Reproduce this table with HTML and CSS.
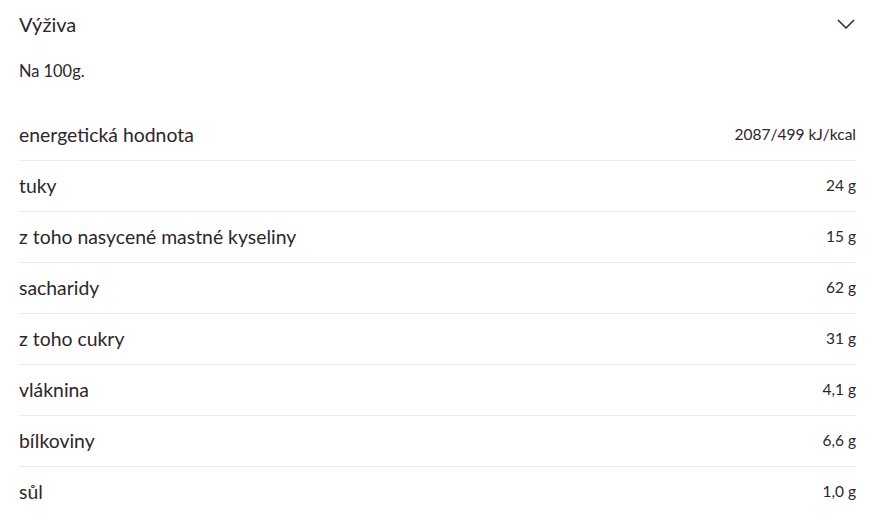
FILE: index.html
```html
<!DOCTYPE html>
<html lang="cs">
<head>
<meta charset="utf-8">
<link rel="stylesheet" href="styles.css">
</head>
<body>
<section class="panel">
  <div class="head">
    <h2 class="title">Výživa</h2>
    <svg class="chev" width="18" height="10" viewBox="0 0 18 10"><path d="M1 1 L9 9 L17 1" fill="none" stroke="#2e2629" stroke-width="1.5"/></svg>
  </div>
  <p class="note">Na 100g.</p>
  <ul class="rows">
    <li class="row"><span class="label">energetická hodnota</span><span class="val">2087/499 kJ/kcal</span></li>
    <li class="row"><span class="label">tuky</span><span class="val">24 g</span></li>
    <li class="row"><span class="label">z toho nasycené mastné kyseliny</span><span class="val">15 g</span></li>
    <li class="row"><span class="label">sacharidy</span><span class="val">62 g</span></li>
    <li class="row"><span class="label">z toho cukry</span><span class="val">31 g</span></li>
    <li class="row"><span class="label">vláknina</span><span class="val">4,1 g</span></li>
    <li class="row"><span class="label">bílkoviny</span><span class="val">6,6 g</span></li>
    <li class="row"><span class="label">sůl</span><span class="val">1,0 g</span></li>
  </ul>
</section>
</body>
</html>
```
FILE: styles.css
```css
html, body { margin: 0; padding: 0; background: #fff; }
body { font-family: Lato, "Noto Sans", sans-serif; color: #2e2629; }
.panel { padding: 0 16px 0 19px; }
.head { height: 50px; padding-bottom: 2px; box-sizing: border-box; display: flex; align-items: center; justify-content: space-between; }
.title { margin: 0; font-size: 20px; font-weight: 400; }
.chev { margin-right: 1px; margin-top: 0; }
.note { margin: 0; height: 60px; font-size: 16.4px; line-height: 42px; }
.rows { list-style: none; margin: 0; padding: 0; }
.row { height: 50px; padding-bottom: 2px; box-sizing: content-box; height: 48px; display: flex; align-items: center; justify-content: space-between; border-bottom: 1px solid #ececec; }
.row:last-child { border-bottom: none; }
.label { font-size: 19.4px; }
.val { font-size: 15.5px; }
```
